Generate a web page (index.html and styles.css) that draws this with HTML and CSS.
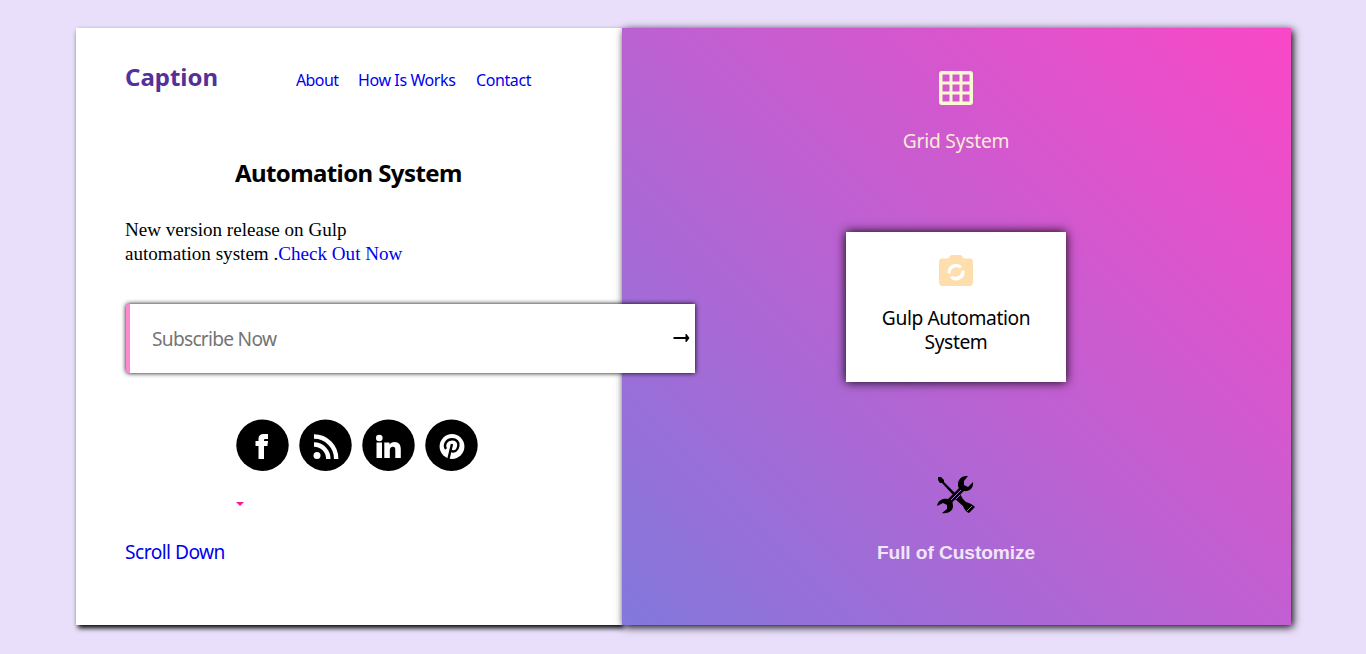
FILE: index.html
```html
<!DOCTYPE html>
<html lang="en">
<head>
<meta charset="utf-8">
<title>Automation System</title>
<link rel="stylesheet" href="styles.css">
</head>
<body>
<main class="card">
  <section class="intro">
    <header class="top">
      <h1 class="logo">Caption</h1>
      <nav class="nav">
        <a class="n1" href="#">About</a>
        <a class="n2" href="#">How Is Works</a>
        <a class="n3" href="#">Contact</a>
      </nav>
    </header>
    <h2 class="title">Automation System</h2>
    <p class="lead">New version release on Gulp<br>automation system .<a href="#">Check Out Now</a></p>
    <form class="subscribe">
      <span class="placeholder">Subscribe Now</span>
      <svg class="arrow" viewBox="0 0 16 8"><path d="M0 3h12V0l1 0 3 4-3 4h-1V5H0z"/></svg>
    </form>
    <div class="social">
      <svg viewBox="0 0 53 52"><ellipse cx="26.500" cy="26.200" rx="26.200" ry="25.700"/><path fill="#fff" d="M22.500 40V27h-3v-5h3v-2.500C22.500 16.500 24.500 15 27.500 15H32v5h-2.500c-1.200 0-1.500.500-1.500 1.300V22h4l-.6 5H28v13z"/></svg>
      <svg viewBox="0 0 53 52"><ellipse cx="26.500" cy="26.200" rx="26.200" ry="25.700"/><circle cx="18" cy="36.500" r="3.500" fill="#fff"/><path fill="none" stroke="#fff" stroke-width="4.400" d="M15 25.500A14.300 14.300 0 0 1 29.300 40M15 17.500A22.200 22.200 0 0 1 37.200 40"/></svg>
      <svg viewBox="0 0 53 52"><ellipse cx="26.500" cy="26.200" rx="26.200" ry="25.700"/><circle cx="17.300" cy="19" r="3.300" fill="#fff"/><path fill="#fff" d="M14.500 23.500H20V39h-5.500zM22.300 23.500h5.200v2c1-1.600 2.800-2.500 5-2.500 4.500 0 6.300 3 6.300 7.200V39h-5.500v-8c0-2-.7-3.200-2.300-3.200-2 0-3.200 1.200-3.200 3.500V39h-5.500z"/></svg>
      <svg viewBox="0 0 53 52"><ellipse cx="26.500" cy="26.200" rx="26.200" ry="25.700"/><circle cx="27" cy="27.500" r="12.400" fill="#fff"/><path fill="none" stroke="#000" stroke-width="2.400" d="M21 30c-2.700-4.300.300-9.700 6-9.700 4.500 0 7 2.700 6.300 6.700-.7 4-3.300 5.800-5.500 5.500-1.500-.2-2.300-1-2.600-2M27 25l-3.800 16"/></svg>
    </div>
    <span class="caret"></span>
    <a class="scroll" href="#">Scroll Down</a>
  </section>
  <section class="features">
    <div class="feature grid">
      <svg viewBox="0 0 34 34"><path fill="#fafad2" fill-rule="evenodd" d="M3 0h28a3 3 0 0 1 3 3v28a3 3 0 0 1-3 3H3a3 3 0 0 1-3-3V3a3 3 0 0 1 3-3zM3.500 3.500v7h7v-7zM13.500 3.500v7h7v-7zM23.500 3.500v7h7v-7zM3.500 13.500v7h7v-7zM13.500 13.500v7h7v-7zM23.500 13.500v7h7v-7zM3.500 23.500v7h7v-7zM13.500 23.500v7h7v-7zM23.500 23.500v7h7v-7z"/></svg>
      <span class="label">Grid System</span>
    </div>
    <div class="feature gulp">
      <svg viewBox="0 0 34 31"><path fill="#ffdead" d="M3.400 3.500H9L12 0h10l3 3.500h5.600A3.400 3.400 0 0 1 34 6.900v20.700a3.400 3.400 0 0 1-3.400 3.400H3.400A3.400 3.400 0 0 1 0 27.600V6.900a3.400 3.400 0 0 1 3.400-3.400z"/><path fill="#fff" d="M8.700 18.500A8.500 8.500 0 0 1 23 11.200l-2 2C16.500 10.500 11.500 13.500 11.500 18.500zM25.500 15.500A8.500 8.500 0 0 1 11 22.800l2-2c4.500 2.700 9.500-.300 9.500-5.300z"/></svg>
      <span class="label">Gulp Automation System</span>
    </div>
    <div class="feature custom">
      <svg viewBox="0 0 38 38"><path d="M1 1l3 0 3 3v2l12 12-2 2L5 7H3L1 4zM19 19l4-1c2 3 3 6 6 8 3 1 6 2 9 5l-6 6c-3-1-5-4-6-7l-8-7z"/><path d="M31 0c-5-1-10 3-10 8 0 2 0 3 1 4L11 23c-5-1-10 1-11 7l6-3 4 2v4l-5 4c6 1 11-2 11-7l-.5-4L27 15c5 1 10-3 9-9l-5 5-4-2V5z"/><path fill="none" stroke="#a968d7" d="M14 24L24 14M19 23l4-4M30 35l5-5"/></svg>
      <span class="label">Full of Customize</span>
    </div>
  </section>
</main>
</body>
</html>
```
FILE: styles.css
```css
* { box-sizing: border-box; }
body {
  margin: 0;
  height: 654px;
  padding: 28px 75px 29px 76px;
  overflow: hidden;
  background: #e9dffb;
  font-family: Tahoma, "Noto Sans", sans-serif;
}
a { color: #0000ee; text-decoration: none; }
svg { display: block; }
.card { display: flex; height: 597px; }
.intro {
  display: flex;
  flex-direction: column;
  align-items: flex-start;
  width: 546px;
  padding: 35px 0 0 49px;
  background: #fff;
  box-shadow: 2px 3px 5px #000;
}
.top { display: flex; align-items: center; height: 28px; }
.logo { width: 171px; margin: 0; color: #553098; font-size: 24px; line-height: 28px; }
.nav { display: flex; gap: 20px; padding-top: 6px; font-size: 16px; line-height: 20px; white-space: nowrap; letter-spacing: -0.4px; }
.n1 { width: 42px; letter-spacing: -0.6px; }
.n2 { width: 98px; }
.title { margin: 67px 0 0 110px; font-size: 24px; line-height: 30px; letter-spacing: -0.6px; white-space: nowrap; }
.lead { margin: 30px 0 0; font: 19.1px/24px "Liberation Serif", serif; }
.subscribe {
  position: relative;
  z-index: 1;
  display: flex;
  align-items: center;
  justify-content: space-between;
  width: 569px;
  height: 69px;
  margin: 38px 0 0 1px;
  padding: 0 5px 0 22px;
  border-left: 4px solid #ff85d5;
  border-radius: 3px 0 0 3px;
  background: #fff;
  box-shadow: 0 0 5px #000;
}
.placeholder { color: #757575; font-size: 19.2px; letter-spacing: -0.75px; }
.arrow { width: 17px; height: 8px; margin-bottom: 1px; }
.social { display: flex; gap: 10px; margin: 46px 0 0 111px; }
.social svg { width: 53px; height: 52px; }
.caret { margin: 31px 0 0 111px; border: 4px solid transparent; border-top-color: #ff1493; border-bottom: 0; }
.scroll { margin-top: 34px; font-size: 19.2px; line-height: 24px; letter-spacing: -0.55px; }
.features {
  display: flex;
  flex-direction: column;
  align-items: center;
  width: 669px;
  padding-right: 1px;
  background: linear-gradient(45deg, #8278dc, #fa48c7);
  box-shadow: 2px 2px 8px #000;
}
.feature {
  display: flex;
  flex-direction: column;
  align-items: center;
  width: 220px;
  text-align: center;
  font-size: 19.2px;
  line-height: 24px;
  letter-spacing: -0.4px;
}
.grid { height: 204px; padding-top: 43px; color: #faebd7; letter-spacing: -0.2px; }
.grid svg { width: 34px; height: 34px; margin-bottom: 24px; }
.gulp { height: 150px; padding: 23px 30px 0; background: #fff; box-shadow: 0 0 10px #000; }
.gulp svg { width: 34px; height: 31px; margin-bottom: 20px; }
.custom { padding-top: 94px; color: #f0e6fa; font: bold 19.2px/24px "Liberation Sans", sans-serif; letter-spacing: -0.1px; }
.custom svg { width: 38px; height: 38px; margin-bottom: 27px; }
```
